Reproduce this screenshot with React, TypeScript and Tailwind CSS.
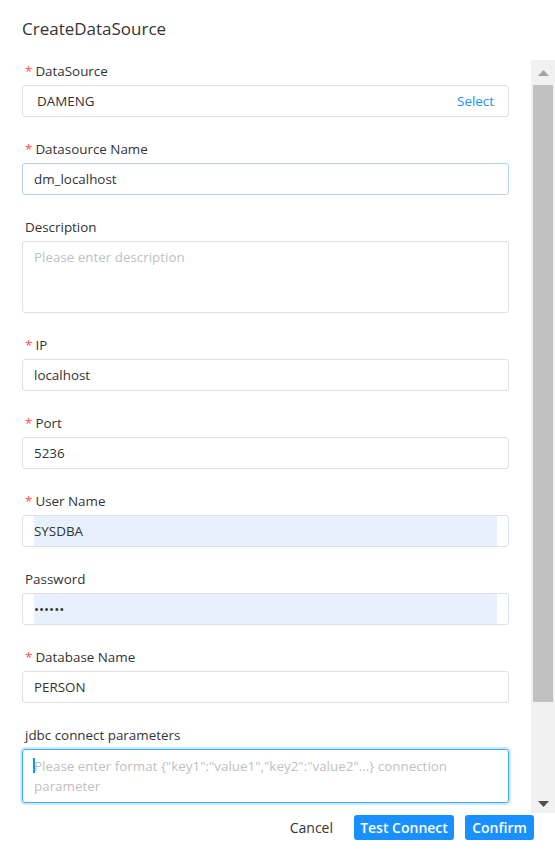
import React from 'react';

type FieldProps = {
  label: string;
  required?: boolean;
  children: React.ReactNode;
};

function Field({ label, required, children }: FieldProps) {
  return (
    <div className="mb-[21px]">
      <div className="h-[22px] pl-[3px] text-[13.4px] leading-[22px] text-[#333]">
        {required && <span className="mr-[3px] text-[#ff4d4f]">*</span>}
        {label}
      </div>
      <div className="mt-[3px]">{children}</div>
    </div>
  );
}

function TextInput({ value, border = 'border-[#dcdfe6]' }: { value: string; border?: string }) {
  return (
    <div className={`flex h-[32px] w-full items-center rounded-[3px] border px-[11px] text-[13.4px] text-[#333] ${border}`}>
      {value}
    </div>
  );
}

// chrome autofill paints the inner input only, the wrapper padding stays white
function AutofillInput({ value }: { value: string }) {
  return (
    <div className="flex h-[32px] w-full rounded-[3px] border border-[#dcdfe6] px-[11px]">
      <div className="flex flex-1 items-center bg-[#e8f0fe] text-[13.4px] text-[#333]">{value}</div>
    </div>
  );
}

function ScrollBar() {
  return (
    <div className="flex w-[24px] flex-col bg-[#f1f1f1]">
      <div className="flex h-[25px] items-start justify-center pt-[10px]">
        <svg width="11" height="6" viewBox="0 0 11 6">
          <path d="M5.5 0L11 6H0z" fill="#a3a3a3" />
        </svg>
      </div>
      <div className="mx-[2px] h-[617px] bg-[#c1c1c1]" />
      <div className="flex-1" />
      <div className="flex h-[25px] items-start justify-center pt-[13px]">
        <svg width="11" height="6" viewBox="0 0 11 6">
          <path d="M0 0H11L5.5 6z" fill="#505050" />
        </svg>
      </div>
    </div>
  );
}

export default function App() {
  return (
    <div className="h-[857px] w-[555px] bg-white font-['Open_Sans','Noto_Sans',sans-serif] text-[#333]">
      <div className="h-[60px] pl-[22px] pt-[16px] text-[17px] leading-[26px] text-[#333]">CreateDataSource</div>

      <div className="flex h-[753px]">
        <div className="flex-1 overflow-hidden px-[22px]">
          <Field label="DataSource" required>
            <div className="flex h-[32px] items-center justify-between rounded-[3px] border border-[#dcdfe6] pl-[14px] pr-[14px] text-[13.4px]">
              <span className="text-[#333]">DAMENG</span>
              <span className="text-[#1890ff]">Select</span>
            </div>
          </Field>

          <Field label="Datasource Name" required>
            <TextInput value="dm_localhost" border="border-[#b3d1f2]" />
          </Field>

          <Field label="Description">
            <div className="h-[72px] rounded-[3px] border border-[#dcdfe6] px-[11px] pt-[4px] text-[13.4px] leading-[22px] text-[#bfbfbf]">
              Please enter description
            </div>
          </Field>

          <Field label="IP" required>
            <TextInput value="localhost" />
          </Field>

          <Field label="Port" required>
            <TextInput value="5236" />
          </Field>

          <Field label="User Name" required>
            <AutofillInput value="SYSDBA" />
          </Field>

          <Field label="Password">
            <AutofillInput value="••••••" />
          </Field>

          <Field label="Database Name" required>
            <TextInput value="PERSON" />
          </Field>

          <Field label="jdbc connect parameters">
            <div className="h-[54px] rounded-[3px] border border-[#40a9ff] px-[11px] pt-[6px] text-[13.4px] leading-[20px] text-[#bfbfbf] shadow-[0_0_0_2px_rgba(24,144,255,0.2)]">
              <span className="relative">
                <span className="absolute left-[-1px] top-[1px] h-[15px] w-[2px] bg-[#1890ff]" />
                Please enter format {'{"key1":"value1","key2":"value2"...}'} connection
              </span>
              <br />
              parameter
            </div>
          </Field>
        </div>
        <ScrollBar />
      </div>

      <div className="flex items-center justify-end pr-[21px] pt-[2px]">
        <button className="mr-[21px] h-[25px] text-[14px] text-[#333]">Cancel</button>
        <button className="mr-[11px] h-[25px] w-[100px] rounded-[3px] bg-[#1890ff] text-[14px] font-semibold text-white">
          Test Connect
        </button>
        <button className="h-[25px] w-[69px] rounded-[3px] bg-[#1890ff] text-[14px] font-semibold text-white">Confirm</button>
      </div>
    </div>
  );
}
